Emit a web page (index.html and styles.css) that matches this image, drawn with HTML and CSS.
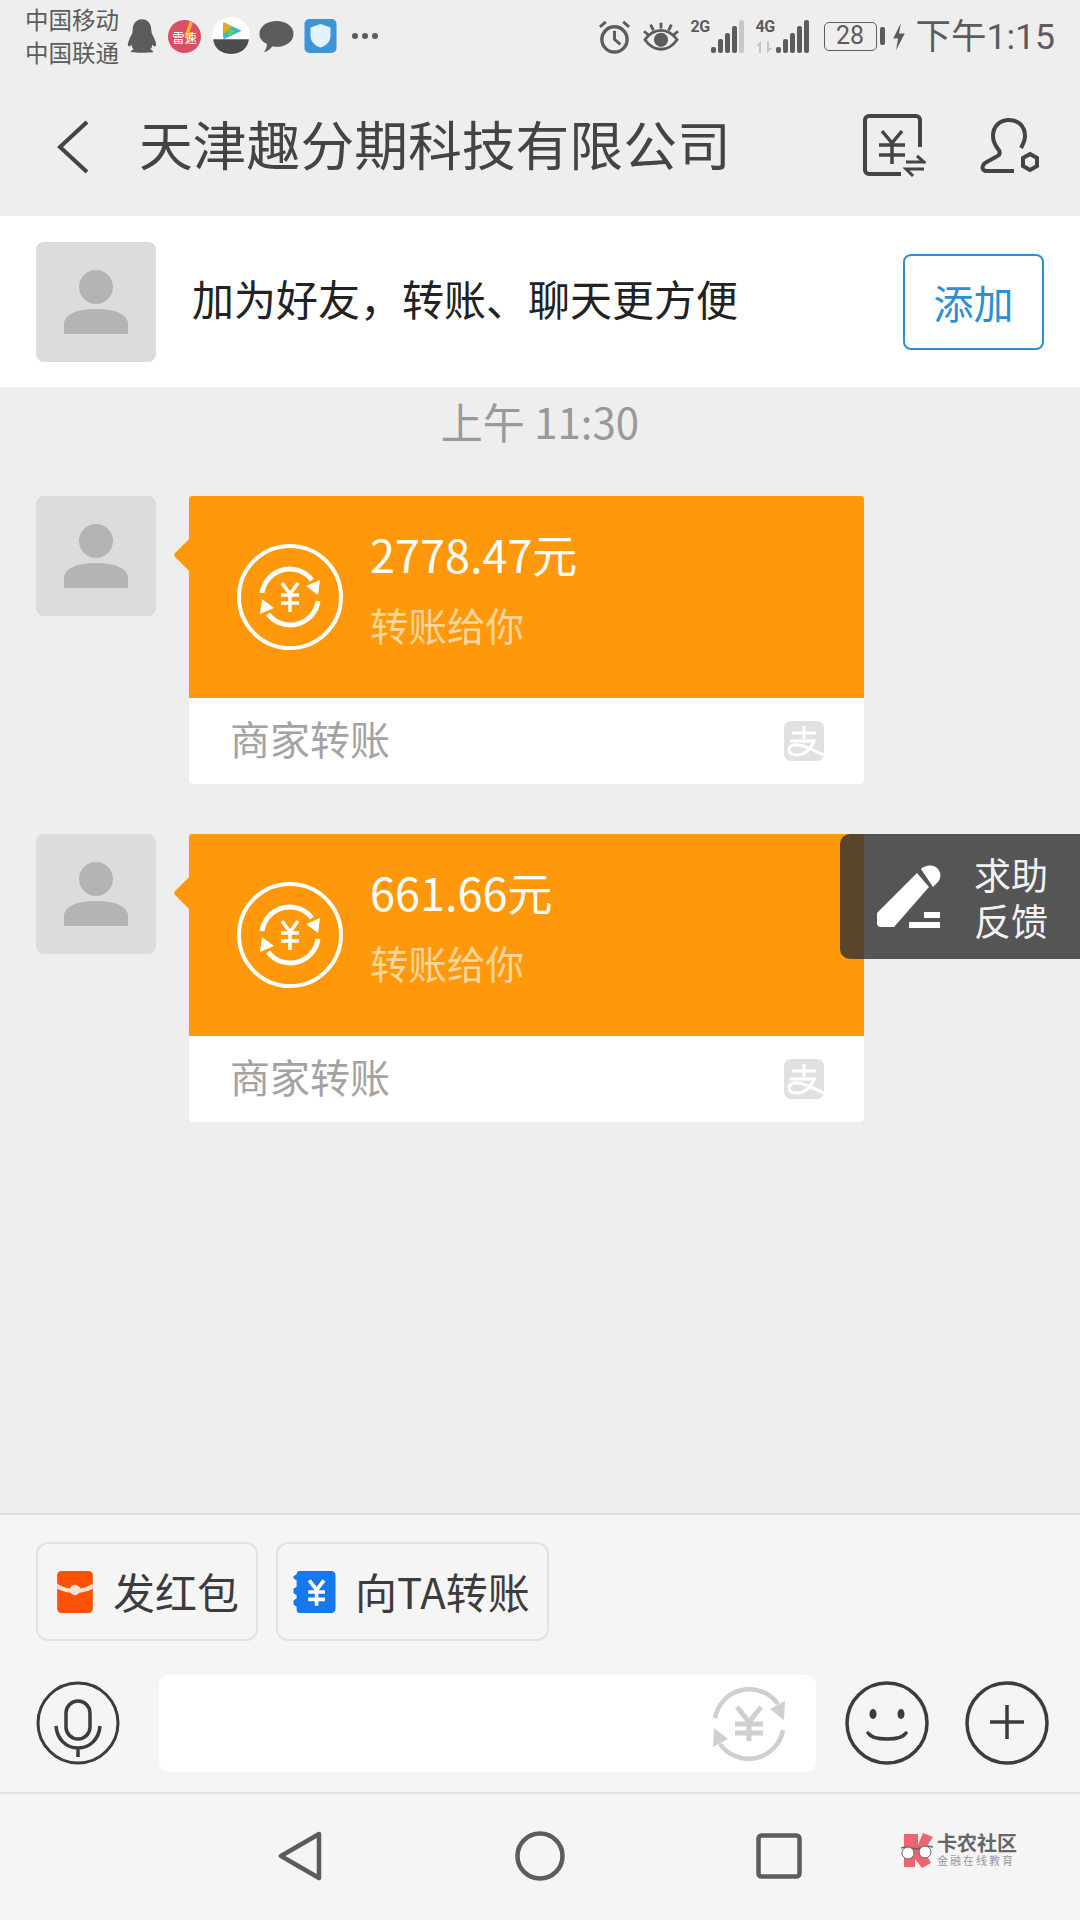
FILE: index.html

```html
<!DOCTYPE html>
<html lang="zh-CN">
<head>
    <meta charset="UTF-8">
    <meta name="viewport" content="width=device-width, initial-scale=1.0">
    <title>天津趣分期科技有限公司</title>
    <link rel="stylesheet" href="styles.css">
</head>
<body>
    <div class="phone">
        <div class="status-bar">
            <div class="carriers">
                <div>中国移动</div>
                <div>中国联通</div>
            </div>
            <div class="status-apps">
                <svg width="30" height="38" viewBox="0 0 32 36"><path d="M16 0c7 0 10 6 10 12 0 3 1 4 3 8 2 5 3 8 1 9-1 .5-2-1-3-2 0 3-1 4-2 5 2 1 3 2 3 3 0 1-24 1-24 0 0-1 1-2 3-3-1-1-2-2-2-5-1 1-2 2.500-3 2-2-1-1-4 1-9 2-4 3-5 3-8C6 6 9 0 16 0z" fill="#5c5c5c"/></svg>
                <svg width="33" height="33" viewBox="0 0 32 32"><circle cx="16" cy="16" r="16" fill="#db4f66"/><path d="M21 1l-5 15h4l-2 9 7-13h-4l3-9z" fill="#f5b22c"/><text x="16" y="22" class="svg-leisu">雷速</text></svg>
                <svg width="38" height="38" viewBox="0 0 36 36"><circle cx="18" cy="18" r="18" fill="#fff"/><path d="M1 21h34c-1 9-8 14-17 14S2 30 1 21z" fill="#4d4d4d"/><path d="M11 5l17 8-17 8c-1-5-1-11 0-16z" fill="#38b6d8"/><path d="M11 5l8 4-8 7c-.5-4-.5-7 0-11z" fill="#f2a71b"/><path d="M15 10l7 3.500-7 4z" fill="#7ac943"/></svg>
                <svg class="app-chat" width="35" height="35" viewBox="0 0 34 34"><path d="M17 2c9 0 16.500 5 16.500 12.500S26 27 17 27c-1 0-3 0-4-.5C11 29 8 32 5 32c1.500-2 3-5 2.500-8C3 22 .5 19 .5 14.500 .5 7 8 2 17 2z" fill="#5c5c5c"/></svg>
                <svg class="app-shield" width="33" height="34" viewBox="0 0 32 34"><rect width="32" height="34" rx="5" fill="#3d94d6"/><path d="M16 5l10 3.500v8c0 6-4 10-10 12-6-2-10-6-10-12v-8z" fill="#e3f2fb"/></svg>
                <span class="more-dots"></span>
            </div>
            <div class="status-right">
                <svg width="33" height="35" viewBox="0 0 34 36" fill="none" stroke="#5c5c5c"><circle cx="17" cy="21" r="13" stroke-width="3.500"/><path d="M17 12v9l6 5" stroke-width="3"/><path d="M2 8l6-5M32 8l-6-5" stroke-width="3"/></svg>
                <svg width="36" height="32" viewBox="0 0 38 32" fill="none" stroke="#5c5c5c" stroke-width="3"><path d="M2 20c5-7 10-10 17-10s12 3 17 10c-5 7-10 10-17 10S7 27 2 20z"/><circle cx="19" cy="20" r="6" fill="#5c5c5c"/><path d="M19 2v6M8 4l3 6M30 4l-3 6M1 11l5 4M37 11l-5 4"/></svg>
                <div class="signal">
                    <span class="net">2G</span>
                    <i class="bar h1"></i><i class="bar h2"></i><i class="bar h3"></i><i class="bar h4"></i><i class="bar h5 off"></i>
                </div>
                <div class="signal">
                    <span class="net">4G</span>
                    <svg class="net-arrows" width="18" height="12" viewBox="0 0 18 12"><path d="M5 0v12H3V5H0zM11 12V0h2v7h3z" fill="#c4c4c4"/></svg>
                    <i class="bar h1"></i><i class="bar h2"></i><i class="bar h3"></i><i class="bar h4"></i><i class="bar h5"></i>
                </div>
                <div class="battery">28</div>
                <span class="battery-cap"></span>
                <svg class="bolt" width="12" height="27" viewBox="0 0 12 28"><path d="M8 0L0 16h5l-2 12 9-17H6z" fill="#5c5c5c"/></svg>
                <span class="clock">下午1:15</span>
            </div>
        </div>

        <div class="title-bar">
            <svg class="back" width="34" height="56" viewBox="0 0 34 56" fill="none" stroke="#444" stroke-width="4"><path d="M31 3L4 28l27 25"/></svg>
            <div class="title">天津趣分期科技有限公司</div>
            <svg class="bill-icon" width="64" height="66" viewBox="0 0 64 66" fill="none" stroke="#444" stroke-width="4"><path d="M58 34V7a4 4 0 0 0-4-4H7a4 4 0 0 0-4 4v50a4 4 0 0 0 4 4h32"/><path d="M20 18l10 12 10-12M17 32h26M17 42h26M30 30v21" stroke-width="3.500"/><path d="M44 49h18l-7-6M62 56H44l7 7" stroke-width="3"/></svg>
            <svg width="60" height="60" viewBox="0 0 60 60" fill="none" stroke="#444" stroke-width="4"><path d="M34 54H7c-4 0-6-3-3-7 3-3 11-6 15-9 1-2 1-4-1-6-3-4-5-8-5-13C13 9 20 3 29 3s16 6 16 16c0 5-2 8-4 12"/><path d="M50 37l7 4v8l-7 4-7-4v-8z"/></svg>
        </div>

        <div class="friend-bar">
            <div class="avatar"><svg width="68" height="64" viewBox="0 0 68 64"><circle cx="34" cy="17" r="17" fill="#b4b4b4"/><path d="M2 64V54c0-10 14-15 32-15s32 5 32 15v10z" fill="#b4b4b4"/></svg></div>
            <div class="friend-text">加为好友，转账、聊天更方便</div>
            <div class="add-btn">添加</div>
        </div>

        <div class="chat">
            <div class="chat-time">上午 11:30</div>

            <div class="msg">
                <div class="avatar"><svg width="68" height="64" viewBox="0 0 68 64"><circle cx="34" cy="17" r="17" fill="#b4b4b4"/><path d="M2 64V54c0-10 14-15 32-15s32 5 32 15v10z" fill="#b4b4b4"/></svg></div>
                <div class="card">
                    <div class="card-top">
                        <svg class="transfer-icon" width="108" height="108" viewBox="0 0 108 108" fill="none" stroke="#fff"><circle cx="54" cy="54" r="51" stroke-width="4"/><path d="M26 50A28 28 0 0 1 76 37" stroke-width="5"/><path d="M82 58A28 28 0 0 1 32 71" stroke-width="5"/><path d="M84 37l-2 15-12-9z" fill="#fff" stroke="none"/><path d="M24 71l2-15 12 9z" fill="#fff" stroke="none"/><path d="M46 40l8 11 8-11M45 52h18M45 60h18M54 51v18" stroke-width="3.500"/></svg>
                        <div class="card-info">
                            <div class="amount">2778.47元</div>
                            <div class="sub">转账给你</div>
                        </div>
                    </div>
                    <div class="card-foot">
                        <span>商家转账</span>
                        <svg width="40" height="40" viewBox="0 0 40 40"><rect width="40" height="40" rx="7" fill="#e1e1e1"/><path d="M8 12h24M20 5v13M6 20h24c-3 9-10 14-17 14-5 0-8-2-8-5 0-4 5-6 10-5 6 1 14 5 25 10" fill="none" stroke="#fff" stroke-width="3"/></svg>
                    </div>
                </div>
            </div>

            <div class="msg">
                <div class="avatar"><svg width="68" height="64" viewBox="0 0 68 64"><circle cx="34" cy="17" r="17" fill="#b4b4b4"/><path d="M2 64V54c0-10 14-15 32-15s32 5 32 15v10z" fill="#b4b4b4"/></svg></div>
                <div class="card">
                    <div class="card-top">
                        <svg class="transfer-icon" width="108" height="108" viewBox="0 0 108 108" fill="none" stroke="#fff"><circle cx="54" cy="54" r="51" stroke-width="4"/><path d="M26 50A28 28 0 0 1 76 37" stroke-width="5"/><path d="M82 58A28 28 0 0 1 32 71" stroke-width="5"/><path d="M84 37l-2 15-12-9z" fill="#fff" stroke="none"/><path d="M24 71l2-15 12 9z" fill="#fff" stroke="none"/><path d="M46 40l8 11 8-11M45 52h18M45 60h18M54 51v18" stroke-width="3.500"/></svg>
                        <div class="card-info">
                            <div class="amount">661.66元</div>
                            <div class="sub">转账给你</div>
                        </div>
                    </div>
                    <div class="card-foot">
                        <span>商家转账</span>
                        <svg width="40" height="40" viewBox="0 0 40 40"><rect width="40" height="40" rx="7" fill="#e1e1e1"/><path d="M8 12h24M20 5v13M6 20h24c-3 9-10 14-17 14-5 0-8-2-8-5 0-4 5-6 10-5 6 1 14 5 25 10" fill="none" stroke="#fff" stroke-width="3"/></svg>
                    </div>
                </div>

                <div class="help">
                    <svg width="64" height="64" viewBox="0 0 64 64" fill="#fff"><path d="M40 8l12 14-35 40H4q-4 0-4-4V48z"/><path d="M44 4c4-4 12-5 16-1 5 5 4 11 0 15l-4 4z"/><path d="M47 47h16v6H47zM32 57h31v6H32z"/></svg>
                    <div class="help-text">求助<br>反馈</div>
                </div>
            </div>
        </div>

        <div class="bottom-panel">
            <div class="chips">
                <div class="chip chip-red">
                    <svg width="36" height="42" viewBox="0 0 34 40"><rect width="34" height="40" rx="4" fill="#fb5207"/><path d="M0 12c6 4 11 5 17 5s11-1 17-5v5c-6 3-11 4-17 4S6 20 0 17z" fill="#fbe1d3"/><circle cx="17" cy="18" r="5" fill="#fbe1d3"/></svg>
                    <span>发红包</span>
                </div>
                <div class="chip chip-blue">
                    <svg width="43" height="42" viewBox="0 0 40 40"><path d="M6 0h30a4 4 0 0 1 4 4v32a4 4 0 0 1-4 4H6a3 3 0 0 1-3-3v-3l-3-2v-4l3-2v-3l-3-2v-4l3-2V9L0 7V5l3-2c0-2 1-3 3-3z" fill="#1677ee"/><path d="M15 9l7 9 7-9M14 20h16M14 27h16M22 18v15" stroke="#fff" stroke-width="3.500" fill="none"/></svg>
                    <span>向TA转账</span>
                </div>
            </div>
            <div class="input-row">
                <svg width="84" height="84" viewBox="0 0 84 84" fill="none" stroke="#3c3c3c" stroke-width="3"><circle cx="42" cy="42" r="40"/><rect x="30" y="20" width="24" height="38" rx="12" stroke-width="3.500"/><path d="M20 45c1 13 10 22 22 22s21-9 22-22M42 67v9" stroke-width="3.500"/></svg>
                <div class="input-box">
                    <svg width="74" height="74" viewBox="0 0 74 74" fill="none" stroke="#cfcfcf" stroke-width="4.500"><path d="M3 31A35 35 0 0 1 66 17"/><path d="M71 43A35 35 0 0 1 8 57"/><path d="M73 14l-1 19-14-11zM1 60l1-19 14 11z" fill="#cfcfcf" stroke="none"/><path d="M25 20l12 15 12-15M23 37h28M23 46h28M37 35v19" stroke-width="5"/></svg>
                </div>
                <svg class="face" width="84" height="84" viewBox="0 0 84 84" fill="none" stroke="#3c3c3c" stroke-width="3.500"><circle cx="42" cy="42" r="40"/><ellipse cx="28" cy="33" rx="3.500" ry="5" fill="#3c3c3c" stroke="none"/><ellipse cx="56" cy="33" rx="3.500" ry="5" fill="#3c3c3c" stroke="none"/><path d="M23 52c5 8 33 8 38 0" stroke-linecap="round"/></svg>
                <svg class="plus" width="84" height="84" viewBox="0 0 84 84" fill="none" stroke="#3c3c3c" stroke-width="3.500"><circle cx="42" cy="42" r="40"/><path d="M25 41h34M42 24v34"/></svg>
            </div>
        </div>

        <div class="nav-bar">
            <svg class="nav-back" width="46" height="50" viewBox="0 0 46 50" fill="none" stroke="#5c5c5c" stroke-width="4.500"><path d="M42 3L4 25l38 22z" stroke-linejoin="round"/></svg>
            <svg class="nav-home" width="50" height="50" viewBox="0 0 50 50" fill="none" stroke="#5c5c5c" stroke-width="4.500"><circle cx="25" cy="25" r="22.500"/></svg>
            <svg class="nav-recent" width="46" height="46" viewBox="0 0 46 46" fill="none" stroke="#5c5c5c" stroke-width="4.500"><rect x="2.500" y="2.500" width="41" height="41" rx="3"/></svg>
            <div class="watermark">
                <svg width="34" height="35" viewBox="0 0 34 35"><path d="M4 1h14v11l5-12 10 4-9 14 7 12-9 5-7-9v8H4z" fill="#ec6470"/><path d="M1 15c3-1 6-1 8 0l8 1 7-2c3-1 6-1 9 0" fill="none" stroke="#666" stroke-width="1.500"/><circle cx="8" cy="20" r="6" fill="#fff" stroke="#666" stroke-width="1"/><circle cx="25" cy="19" r="6" fill="#fff" stroke="#666" stroke-width="1"/></svg>
                <div class="wm-text">
                    <div class="wm-name">卡农社区</div>
                    <div class="wm-sub">金融在线教育</div>
                </div>
            </div>
        </div>
    </div>
</body>
</html>
```

FILE: styles.css

```css
* {
    box-sizing: border-box;
}
body {
    margin: 0;
    font-family: "Noto Sans CJK SC", "Noto Sans", sans-serif;
    background-color: #eeeeee;
}
.phone {
    width: 1080px;
    height: 1920px;
    display: flex;
    flex-direction: column;
    overflow: hidden;
}
.status-bar {
    height: 84px;
    display: flex;
    align-items: center;
    padding: 0 25px 12px 25px;
    color: #5c5c5c;
}
.carriers {
    font-size: 23.5px;
    line-height: 33px;
}
.status-apps {
    display: flex;
    align-items: center;
    gap: 11px;
    margin-left: 8px;
}
.app-chat {
    margin-left: -2px;
}
.app-shield {
    margin-left: -1px;
}
.svg-leisu {
    font-size: 12px;
    fill: #fff;
    text-anchor: middle;
}
.more-dots {
    width: 6px;
    height: 6px;
    border-radius: 50%;
    background-color: #5c5c5c;
    box-shadow: 10px 0 0 #5c5c5c, 20px 0 0 #5c5c5c;
    margin-left: 4px;
}
.status-right {
    margin-left: auto;
    display: flex;
    align-items: center;
    gap: 12px;
}
.signal {
    position: relative;
    width: 53px;
    height: 34px;
    display: flex;
    align-items: flex-end;
    justify-content: flex-end;
    gap: 2.5px;
}
.net {
    position: absolute;
    left: 0;
    top: 0;
    font-family: "Roboto", sans-serif;
    font-weight: 700;
    font-size: 16px;
    line-height: 16px;
    letter-spacing: -0.5px;
}
.net-arrows {
    position: absolute;
    left: 0;
    bottom: 0;
}
.bar {
    display: block;
    width: 4.5px;
    background-color: #5c5c5c;
    border-radius: 2px;
}
.bar.off {
    background-color: #c8c8c8;
}
.h1 { height: 6px; }
.h2 { height: 14px; }
.h3 { height: 20px; }
.h4 { height: 27px; }
.h5 { height: 33px; }
.battery {
    width: 53px;
    height: 29px;
    border: 1.5px solid #5c5c5c;
    border-radius: 5px;
    font-family: "Roboto", sans-serif;
    font-size: 25px;
    line-height: 26px;
    text-align: center;
    margin-left: 3px;
}
.battery-cap {
    width: 5px;
    height: 18px;
    border-radius: 2px;
    background-color: #5c5c5c;
    margin-left: -9px;
}
.bolt {
    margin-left: -4px;
}
.clock {
    font-family: "Roboto", "Noto Sans CJK SC", sans-serif;
    font-size: 35.5px;
    line-height: 40px;
    margin-left: -1px;
    padding-top: 2px;
}
.title-bar {
    height: 132px;
    display: flex;
    align-items: center;
    padding: 0 40px 6px 56px;
}
.title {
    font-size: 53.8px;
    line-height: 70px;
    color: #444;
    margin-left: 49px;
    padding-bottom: 8px;
    flex: 1;
    white-space: nowrap;
}
.bill-icon {
    margin-right: 54px;
    margin-top: -2px;
}
.friend-bar {
    height: 171px;
    background-color: #fff;
    display: flex;
    align-items: center;
    padding: 0 36px;
}
.avatar {
    width: 120px;
    height: 120px;
    flex: none;
    border-radius: 8px;
    background-color: #dcdcdc;
    display: flex;
    align-items: center;
    justify-content: center;
}
.friend-text {
    font-size: 42px;
    color: #222;
    margin-left: 36px;
    padding-bottom: 8px;
    flex: 1;
}
.add-btn {
    width: 141px;
    height: 96px;
    border: 2.5px solid #2b8fd6;
    border-radius: 8px;
    color: #2b8fd6;
    font-size: 40px;
    display: flex;
    align-items: center;
    justify-content: center;
}
.chat {
    flex: 1;
    padding: 0 36px;
}
.chat-time {
    height: 109px;
    padding-top: 6px;
    font-size: 42px;
    line-height: 56px;
    color: #999;
    text-align: center;
}
.msg {
    position: relative;
    display: flex;
    gap: 33px;
    margin-bottom: 50px;
}
.card {
    position: relative;
    width: 675px;
    background-color: #fff;
    border-radius: 3px;
    box-shadow: 0 0 1px rgba(0, 0, 0, 0.15);
}
.card::before {
    content: "";
    position: absolute;
    left: -11px;
    top: 47px;
    width: 24px;
    height: 24px;
    background-color: #ff980a;
    transform: rotate(45deg);
    border-radius: 3px;
}
.card-top {
    position: relative;
    height: 202px;
    background-color: #ff980a;
    border-radius: 3px 3px 0 0;
    display: flex;
    padding: 47px 0 0 47px;
}
.transfer-icon {
    flex: none;
}
.card-info {
    margin-left: 26px;
    margin-top: -20px;
}
.amount {
    font-size: 45px;
    line-height: 62px;
    color: #fff;
}
.sub {
    font-size: 38.5px;
    line-height: 52px;
    margin-top: 13px;
    color: rgba(255, 255, 255, 0.6);
}
.card-foot {
    height: 86px;
    display: flex;
    align-items: center;
    justify-content: space-between;
    padding: 0 40px 0 41px;
    font-size: 40px;
    color: #a3a3a3;
}
.card-foot span {
    padding-bottom: 6px;
}
.help {
    position: absolute;
    right: -36px;
    top: 0;
    width: 240px;
    height: 125px;
    border-radius: 10px 0 0 10px;
    background-color: rgba(51, 51, 51, 0.82);
    display: flex;
    align-items: center;
    padding-left: 37px;
    gap: 33px;
    color: #f2f2f2;
}
.help-text {
    font-size: 37px;
    line-height: 46px;
}
.bottom-panel {
    height: 281px;
    background-color: #f5f5f5;
    border-top: 2px solid #dedede;
    border-bottom: 2px solid #e2e2e2;
    padding: 27px 24px 0 36px;
}
.chips {
    display: flex;
    gap: 18px;
}
.chip {
    height: 99px;
    border: 2px solid #e2e2e2;
    border-radius: 12px;
    display: flex;
    align-items: center;
    font-size: 42px;
    color: #3c3c3c;
}
.chip span {
    padding-bottom: 2px;
}
.chip-red {
    width: 222px;
    padding-left: 19px;
    gap: 20px;
}
.chip-blue {
    width: 273px;
    padding-left: 15px;
    gap: 19px;
}
.input-row {
    display: flex;
    align-items: center;
    margin-top: 32px;
}
.input-box {
    width: 657px;
    height: 97px;
    margin-left: 39px;
    margin-top: 2px;
    background-color: #fff;
    border-radius: 10px;
    display: flex;
    align-items: center;
    justify-content: flex-end;
    padding-right: 30px;
}
.face {
    margin-left: 29px;
}
.plus {
    margin-left: 36px;
}
.nav-bar {
    position: relative;
    flex: none;
    height: 126px;
    background-color: #f5f5f5;
    display: flex;
    align-items: center;
    padding-left: 277px;
    padding-bottom: 2px;
}
.nav-home {
    margin-left: 192px;
}
.nav-recent {
    margin-left: 191px;
}
.watermark {
    position: absolute;
    left: 900px;
    top: 39px;
    display: flex;
    gap: 3px;
}
.wm-text {
    color: #666;
}
.wm-name {
    font-size: 20px;
    font-weight: 700;
    line-height: 20px;
}
.wm-sub {
    font-size: 11px;
    letter-spacing: 2px;
    line-height: 15px;
    color: #999;
}
```
